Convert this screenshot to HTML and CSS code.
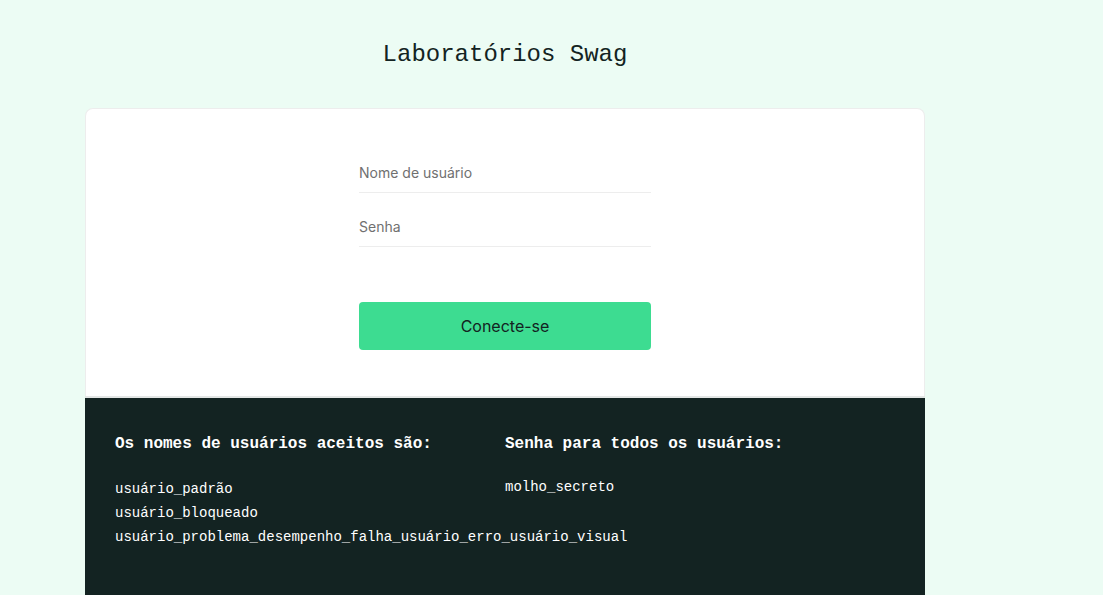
FILE: index.html
```html
<!DOCTYPE html>
<html lang="pt">
<head>
<meta charset="utf-8">
<title>Laboratórios Swag</title>
<link rel="stylesheet" href="styles.css">
</head>
<body>
<div class="page">
  <header class="header">Laboratórios Swag</header>
  <main class="card">
    <div class="login-wrap">
      <form class="login">
        <input class="field" type="text" placeholder="Nome de usuário">
        <input class="field" type="password" placeholder="Senha">
        <button class="btn" type="button">Conecte-se</button>
      </form>
    </div>
    <section class="creds">
      <div class="col">
        <h4 class="creds-title">Os nomes de usuários aceitos são:</h4>
        <ul class="creds-list">
          <li>usuário_padrão</li>
          <li>usuário_bloqueado</li>
          <li>usuário_problema_desempenho_falha_usuário_erro_usuário_visual</li>
        </ul>
      </div>
      <div class="col">
        <h4 class="creds-title">Senha para todos os usuários:</h4>
        <ul class="creds-list pw">
          <li>molho_secreto</li>
        </ul>
      </div>
    </section>
  </main>
</div>
</body>
</html>
```
FILE: styles.css
```css
html, body {
  margin: 0;
  padding: 0;
  background: #ecfcf4;
  overflow: hidden;
}
.page {
  width: 840px;
  margin-left: 85px;
}
.header {
  font-family: "Liberation Mono", "DejaVu Sans Mono", monospace;
  font-size: 24px;
  line-height: 30px;
  color: #132322;
  text-align: center;
  padding-top: 40px;
  height: 70px;
  box-sizing: border-box;
}
.card {
  margin-top: 38px;
}
.login-wrap {
  background: #fff;
  border: 1px solid #ededed;
  border-bottom: none;
  border-radius: 8px 8px 0 0;
}
.login {
  width: 292px;
  margin: 0 auto;
  padding: 43px 0 46px;
  display: flex;
  flex-direction: column;
}
.field {
  font-family: "Inter", "Noto Sans", sans-serif;
  font-size: 14px;
  height: 40px;
  border: none;
  border-bottom: 1px solid #ededed;
  padding: 0;
  margin: 0 0 13px;
  outline: none;
  color: #132322;
  background: transparent;
}
.field::placeholder {
  color: #707070;
}
.btn {
  margin-top: 42px;
  height: 48px;
  border: none;
  border-radius: 4px;
  background: #3ddc91;
  color: #132322;
  font-family: "Inter", "Noto Sans", sans-serif;
  font-size: 16px;
  cursor: pointer;
}
.creds {
  border-top: 2px solid #e3e6e5;
  background: #132322;
  color: #fff;
  display: grid;
  grid-template-columns: 390px 390px;
  padding: 36px 30px 60px;
  min-height: 200px;
}
.creds-title {
  margin: 0;
  font-family: "Liberation Mono", "DejaVu Sans Mono", monospace;
  font-weight: bold;
  font-size: 16px;
  line-height: 20px;
}
.creds-list {
  list-style: none;
  margin: 23px 0 0;
  padding: 0;
  font-family: "Liberation Mono", "DejaVu Sans Mono", monospace;
  font-size: 14px;
  line-height: 24px;
  white-space: nowrap;
}
.creds-list.pw {
  margin-top: 21px;
}
```
